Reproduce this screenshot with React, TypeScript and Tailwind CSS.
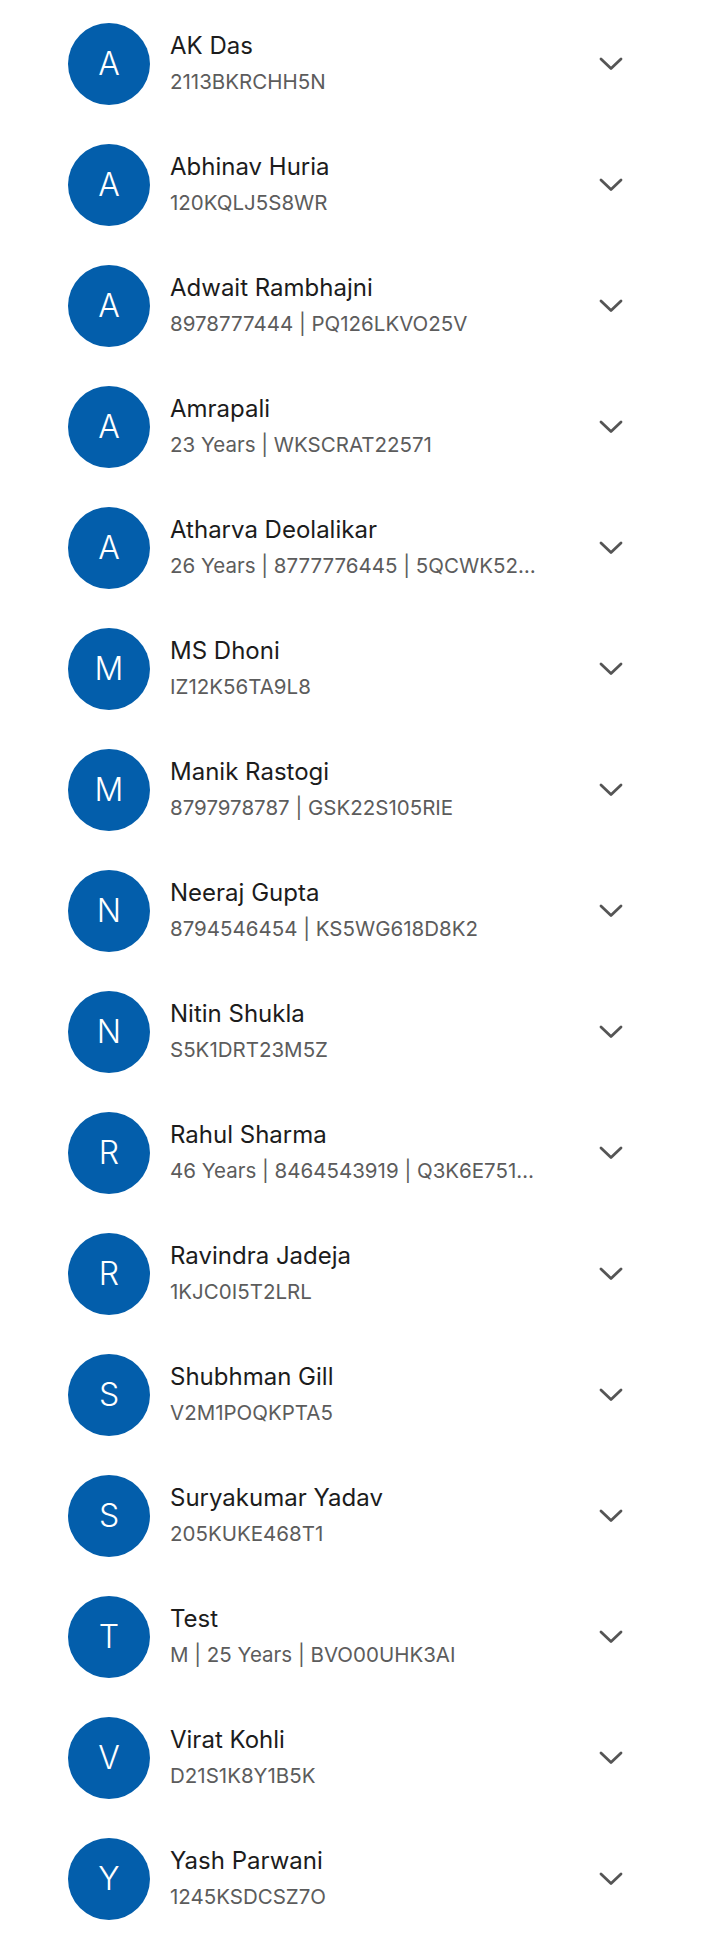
const patients = [
  { name: "AK Das", info: "2113BKRCHH5N" },
  { name: "Abhinav Huria", info: "120KQLJ5S8WR" },
  { name: "Adwait Rambhajni", info: "8978777444 | PQ126LKVO25V" },
  { name: "Amrapali", info: "23 Years | WKSCRAT22571" },
  { name: "Atharva Deolalikar", info: "26 Years | 8777776445 | 5QCWK52HH1TY" },
  { name: "MS Dhoni", info: "IZ12K56TA9L8" },
  { name: "Manik Rastogi", info: "8797978787 | GSK22S105RIE" },
  { name: "Neeraj Gupta", info: "8794546454 | KS5WG618D8K2" },
  { name: "Nitin Shukla", info: "S5K1DRT23M5Z" },
  { name: "Rahul Sharma", info: "46 Years | 8464543919 | Q3K6E7519JKP" },
  { name: "Ravindra Jadeja", info: "1KJC0I5T2LRL" },
  { name: "Shubhman Gill", info: "V2M1POQKPTA5" },
  { name: "Suryakumar Yadav", info: "205KUKE468T1" },
  { name: "Test", info: "M | 25 Years | BVO00UHK3AI" },
  { name: "Virat Kohli", info: "D21S1K8Y1B5K" },
  { name: "Yash Parwani", info: "1245KSDCSZ7O" },
];

const Chevron = () => (
  <svg width="24" height="14" viewBox="0 0 24 14" fill="none">
    <path
      d="M2 2 L12 11.5 L22 2"
      stroke="#555555"
      strokeWidth="2.8"
      strokeLinecap="round"
      strokeLinejoin="round"
    />
  </svg>
);

export default function App() {
  return (
    <div
      className="w-[720px] min-h-[1946px] bg-white pt-[3px]"
      style={{ fontFamily: "Inter, Roboto, sans-serif" }}
    >
      {patients.map((p, i) => (
        <div key={i} className="flex h-[121px] items-center pl-[68px]">
          <div className="flex h-[82px] w-[82px] shrink-0 items-center justify-center rounded-full bg-[#035eab]">
            <span className="text-[32px] font-light leading-none text-white">
              {p.name[0]}
            </span>
          </div>
          <div className="ml-[20px] flex w-[368px] min-w-0 flex-col">
            <p className="truncate text-[24px] leading-[30px] text-[#1c1c1c]">
              {p.name}
            </p>
            <p className="mt-[7px] truncate text-[20.5px] leading-[28px] text-[#5c5c5c]">
              {p.info}
            </p>
          </div>
          <div className="ml-[49px] flex w-[48px] items-center justify-center">
            <Chevron />
          </div>
        </div>
      ))}
    </div>
  );
}
